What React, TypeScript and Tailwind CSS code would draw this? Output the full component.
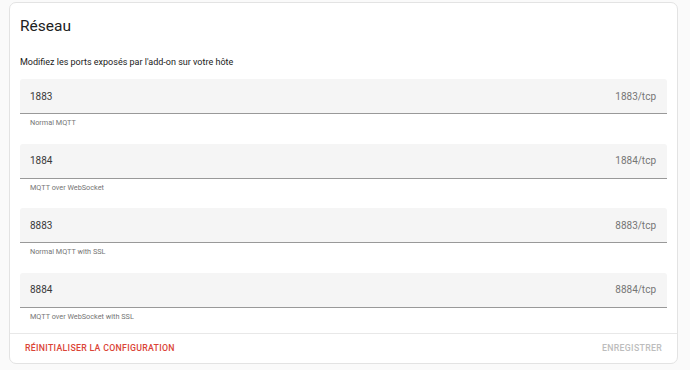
import React from "react";

const ports = [
  { value: "1883", suffix: "1883/tcp", helper: "Normal MQTT" },
  { value: "1884", suffix: "1884/tcp", helper: "MQTT over WebSocket" },
  { value: "8883", suffix: "8883/tcp", helper: "Normal MQTT with SSL" },
  { value: "8884", suffix: "8884/tcp", helper: "MQTT over WebSocket with SSL" },
];

export default function App() {
  return (
    <div
      className="w-[690px] h-[370px] bg-[#fafafa] pt-[2px] pl-[9px] overflow-hidden"
      style={{ fontFamily: "Roboto, 'Noto Sans', sans-serif" }}
    >
      <div className="w-[669px] h-[362px] bg-white border border-[#e3e3e3] rounded-[7px] flex flex-col">
        <div className="px-[10px] pt-[13px]">
          <div className="text-[15.5px] leading-[20px] text-[#212121]">Réseau</div>
          <div className="mt-[20px] text-[9px] leading-[12px] text-[#212121]">
            Modifiez les ports exposés par l'add-on sur votre hôte
          </div>
          <div className="mt-[11px] flex flex-col gap-[15.6px]">
            {ports.map((p) => (
              <div key={p.value}>
                <div className="h-[35px] bg-[#f5f5f5] rounded-t-[3px] border-b border-[#999999] flex items-center justify-between pl-[10px] pr-[11px]">
                  <span className="text-[10px] text-[#3a3a3a]">{p.value}</span>
                  <span className="text-[10px] text-[#757575]">{p.suffix}</span>
                </div>
                <div className="pt-[4px] pl-[10px] text-[7.3px] leading-[10px] text-[#757575]">
                  {p.helper}
                </div>
              </div>
            ))}
          </div>
        </div>
        <div className="mt-auto border-t border-[#e8e8e8] h-[30px] flex items-center justify-between px-[15px]">
          <span className="text-[8.75px] font-medium tracking-[0.3px] text-[#db4437]">
            RÉINITIALISER LA CONFIGURATION
          </span>
          <span className="text-[8.75px] font-medium tracking-[0.3px] text-[#bdbdbd]">
            ENREGISTRER
          </span>
        </div>
      </div>
    </div>
  );
}
